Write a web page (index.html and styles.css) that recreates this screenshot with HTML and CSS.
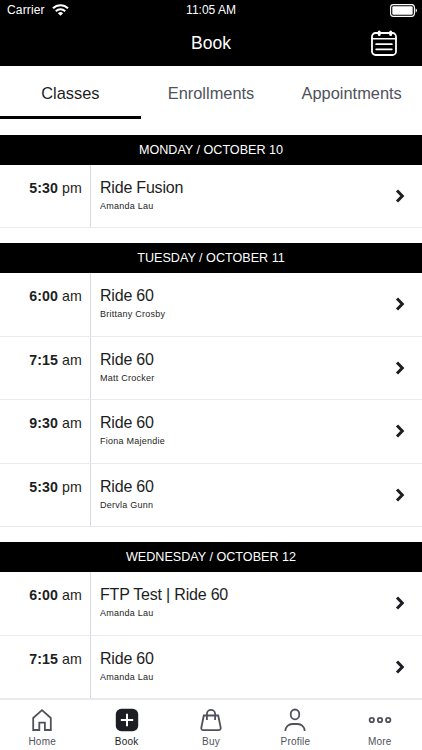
FILE: index.html
```html
<!DOCTYPE html>
<html lang="en">
<head>
    <meta charset="UTF-8">
    <meta name="viewport" content="width=device-width, initial-scale=1">
    <title>Book</title>
    <link rel="stylesheet" href="styles.css">
</head>
<body>
    <header>
        <div class="status">
            <div class="carrier">
                <span>Carrier</span>
                <svg width="17" height="12" viewBox="0 0 17 12" fill="none" stroke="#fff" stroke-width="2">
                    <path d="M1 4.3a10.6 10.6 0 0 1 15 0"/>
                    <path d="M3.8 7.2a6.7 6.7 0 0 1 9.4 0"/>
                    <path d="M8.5 11.8L5.9 9.3a3.7 3.7 0 0 1 5.2 0z" fill="#fff" stroke="none"/>
                </svg>
            </div>
            <span class="clock">11:05 AM</span>
            <svg class="battery" width="28" height="13" viewBox="0 0 28 13">
                <rect x="0.6" y="0.6" width="23.8" height="11.8" rx="2.8" fill="none" stroke="#fff" stroke-width="1.1"/>
                <rect x="2.3" y="2.3" width="20.4" height="8.4" rx="1.2" fill="#fff"/>
                <path d="M25.6 4.3c1.8.7 1.8 3.7 0 4.4z" fill="#fff"/>
            </svg>
        </div>
        <div class="titlebar">
            <h1>Book</h1>
            <svg class="calendar" width="26" height="26" viewBox="0 0 26 26" fill="none" stroke="#fff" stroke-width="1.8" stroke-linecap="round">
                <rect x="1" y="3" width="24" height="22" rx="3.5"/>
                <path d="M1 8.8h24" stroke-width="1.5"/>
                <path d="M5.2 14.2h15.6M5.2 19.3h15.6"/>
                <path d="M8.2 2v2.4M19.7 2v2.4" stroke-width="3"/>
            </svg>
        </div>
    </header>

    <nav class="tabs">
        <a class="active">Classes</a>
        <a>Enrollments</a>
        <a>Appointments</a>
    </nav>

    <main>
        <section>
            <h2>MONDAY / OCTOBER 10</h2>
            <div class="row">
                <div class="time"><b>5:30</b> pm</div>
                <div class="info"><h3>Ride Fusion</h3><p>Amanda Lau</p></div>
                <svg class="arrow" viewBox="0 0 10 14"><path d="M2 1.500l5.300 5.500L2 12.500"/></svg>
            </div>
        </section>
        <section>
            <h2>TUESDAY / OCTOBER 11</h2>
            <div class="row">
                <div class="time"><b>6:00</b> am</div>
                <div class="info"><h3>Ride 60</h3><p>Brittany Crosby</p></div>
                <svg class="arrow" viewBox="0 0 10 14"><path d="M2 1.500l5.300 5.500L2 12.500"/></svg>
            </div>
            <div class="row">
                <div class="time"><b>7:15</b> am</div>
                <div class="info"><h3>Ride 60</h3><p>Matt Crocker</p></div>
                <svg class="arrow" viewBox="0 0 10 14"><path d="M2 1.500l5.300 5.500L2 12.500"/></svg>
            </div>
            <div class="row">
                <div class="time"><b>9:30</b> am</div>
                <div class="info"><h3>Ride 60</h3><p>Fiona Majendie</p></div>
                <svg class="arrow" viewBox="0 0 10 14"><path d="M2 1.500l5.300 5.500L2 12.500"/></svg>
            </div>
            <div class="row">
                <div class="time"><b>5:30</b> pm</div>
                <div class="info"><h3>Ride 60</h3><p>Dervla Gunn</p></div>
                <svg class="arrow" viewBox="0 0 10 14"><path d="M2 1.500l5.300 5.500L2 12.500"/></svg>
            </div>
        </section>
        <section>
            <h2>WEDNESDAY / OCTOBER 12</h2>
            <div class="row">
                <div class="time"><b>6:00</b> am</div>
                <div class="info"><h3>FTP Test | Ride 60</h3><p>Amanda Lau</p></div>
                <svg class="arrow" viewBox="0 0 10 14"><path d="M2 1.500l5.300 5.500L2 12.500"/></svg>
            </div>
            <div class="row">
                <div class="time"><b>7:15</b> am</div>
                <div class="info"><h3>Ride 60</h3><p>Amanda Lau</p></div>
                <svg class="arrow" viewBox="0 0 10 14"><path d="M2 1.500l5.300 5.500L2 12.500"/></svg>
            </div>
        </section>
    </main>

    <nav class="bottom">
        <a>
            <svg viewBox="0 0 24 24"><path d="M3.2 10L12 2.2l8.8 7.8v12h-5.900v-7.400H9.300v7.400H3.200z"/></svg>
            <span>Home</span>
        </a>
        <a class="active">
            <svg viewBox="0 0 24 24"><rect x="0.800" y="0.800" width="22.400" height="22.400" rx="5.500" fill="#1d1e24" stroke="none"/><path d="M12 5.800v12.400M5.800 12h12.400" stroke="#fff" stroke-width="2"/></svg>
            <span>Book</span>
        </a>
        <a>
            <svg viewBox="0 0 24 24"><path d="M4.800 7.500h14.400l2.500 12.300a2 2 0 0 1-2 2.400H4.300a2 2 0 0 1-2-2.400z"/><path d="M7.900 12V6a4.100 4.100 0 0 1 8.200 0v6"/></svg>
            <span>Buy</span>
        </a>
        <a>
            <svg viewBox="0 0 24 24"><ellipse cx="12" cy="6.400" rx="4.300" ry="4.900"/><path d="M2.300 23c0-4.400 3.600-7 7-7h5.400c3.400 0 7 2.600 7 7"/></svg>
            <span>Profile</span>
        </a>
        <a>
            <svg viewBox="0 0 24 24"><circle cx="3.800" cy="12" r="2.200"/><circle cx="12" cy="12" r="2.200"/><circle cx="20.200" cy="12" r="2.200"/></svg>
            <span>More</span>
        </a>
    </nav>
</body>
</html>
```

FILE: styles.css
```css
* { box-sizing: border-box; }
body { margin: 0; height: 750px; overflow: hidden; background: #fff; color: #1d1e24; font-family: "Liberation Sans", Arial, sans-serif; }
h1, h2, h3, p { margin: 0; font-weight: normal; }
svg { display: block; }

header { height: 66px; background: #000; color: #fff; }
.status { display: grid; grid-template-columns: 1fr auto 1fr; height: 20px; padding: 0 4px; align-items: center; font-size: 12px; line-height: 20px; }
.carrier { display: flex; gap: 7px; align-items: center; padding-left: 3px; letter-spacing: 0.15px; }
.battery { justify-self: end; }
.titlebar { display: grid; grid-template-columns: 1fr auto 1fr; height: 46px; align-items: center; padding: 0 25px; }
.titlebar h1 { grid-column: 2; font-size: 17.5px; line-height: 20px; }
.calendar { justify-self: end; }

.tabs { display: flex; height: 53px; margin-bottom: 15.5px; }
.tabs a { flex: 1; text-align: center; color: #50525b; font-size: 16.4px; line-height: 54px; }
.tabs .active { color: #1d1e24; border-bottom: 3px solid #000; }

section { margin-bottom: 15px; }
h2 { height: 30px; background: #000; color: #fff; text-align: center; font-size: 12.6px; line-height: 30px; }
.row { display: flex; height: 63.5px; border-bottom: 1px solid #e9eaee; }
.time { width: 91px; padding: 14px 8px 0 0; border-right: 1px solid #d8d9df; text-align: right; font-size: 14.2px; line-height: 18px; letter-spacing: 0.1px; }
.info { flex: 1; padding: 14px 0 0 9px; }
.info h3 { font-size: 16px; line-height: 18px; letter-spacing: -0.2px; }
.info p { margin-top: 4px; font-size: 9px; line-height: 11px; letter-spacing: 0.25px; }
.arrow { width: 10px; height: 14px; margin: 24px 17.5px 0 0; fill: none; stroke: #1d1e24; stroke-width: 3; }

.bottom { position: fixed; left: 0; right: 0; bottom: 0; display: flex; height: 51px; background: #fff; border-top: 1px solid #e9eaee; }
.bottom a { flex: 1; display: flex; flex-direction: column; align-items: center; padding-top: 7.5px; color: #50525b; font-size: 10px; letter-spacing: 0.2px; }
.bottom svg { width: 24px; height: 24px; fill: none; stroke: #50525b; stroke-width: 1.8; }
.bottom span { margin-top: 4.5px; line-height: 12px; }
.bottom .active { color: #1d1e24; }
```
